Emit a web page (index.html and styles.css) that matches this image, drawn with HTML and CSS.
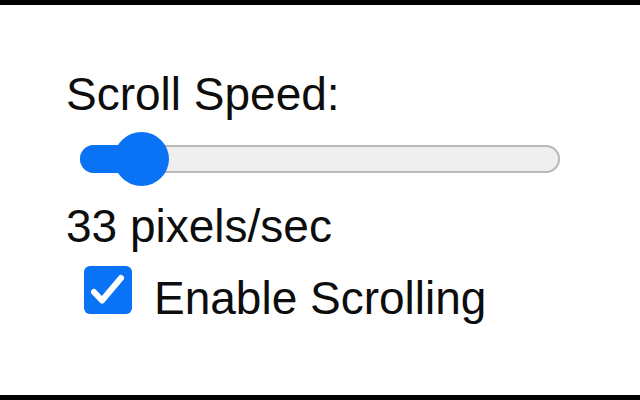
FILE: index.html
```html
<!doctype html>
<html lang="en">
<head>
  <meta charset="utf-8">
  <title>Scroll Settings</title>
  <link rel="stylesheet" href="styles.css">
</head>

<body class="app">
  <div class="panel">
    <div class="title">Scroll Speed:</div>

    <div class="slider">
      <div class="slider-track"></div>
      <div class="slider-fill"></div>
      <div class="slider-thumb"></div>
    </div>

    <div class="speed"><span id="speed">33</span> pixels/sec</div>

    <label class="toggle">
      <svg class="checkbox" viewBox="0 0 48 48" width="48" height="48">
        <rect x="0" y="0" width="48" height="48" rx="6" fill="#0a72f5"/>
        <path d="M10 26 L18 34.5 L37 12" fill="none" stroke="#fff" stroke-width="6" stroke-linecap="round" stroke-linejoin="round"/>
      </svg>
      <span class="toggle-text">Enable Scrolling</span>
    </label>
  </div>
</body>
</html>
```

FILE: styles.css
```css
html, body {
  margin: 0;
  padding: 0;
}

.app {
  width: 640px;
  height: 400px;
  box-sizing: border-box;
  background: #ffffff;
  border-top: 5px solid #000000;
  border-bottom: 5px solid #000000;
  font-family: 'Liberation Sans', Arial, sans-serif;
  font-size: 46px;
  line-height: 52px;
  color: #0d0d0d;
}

.panel {
  display: flex;
  flex-direction: column;
  align-items: flex-start;
  padding: 63px 0 0 66px;
}

.title {
  height: 52px;
}

.slider {
  position: relative;
  width: 480px;
  height: 54px;
  margin: 12px 0 0 14px;

  display: flex;
  align-items: center;
}

.slider-track {
  flex: 1 1 auto;
  height: 28px;
  box-sizing: border-box;
  border: 2.5px solid #b9b9b9;
  border-radius: 14px;
  background: #efefef;
}

.slider-fill {
  position: absolute;
  left: 0;
  top: 13px;
  width: 62px;
  height: 28px;
  border-radius: 14px;
  background: #0a72f5;
}

.slider-thumb {
  position: absolute;
  left: 34px;
  top: 0;
  width: 55px;
  height: 54px;
  border-radius: 50%;
  background: #0a72f5;
}

.speed {
  margin-top: 14px;
}

.toggle {
  display: flex;
  align-items: baseline;
  margin-top: 14px;
}

.checkbox {
  display: block;
  margin: 0 22px 0 18px;
}
```
